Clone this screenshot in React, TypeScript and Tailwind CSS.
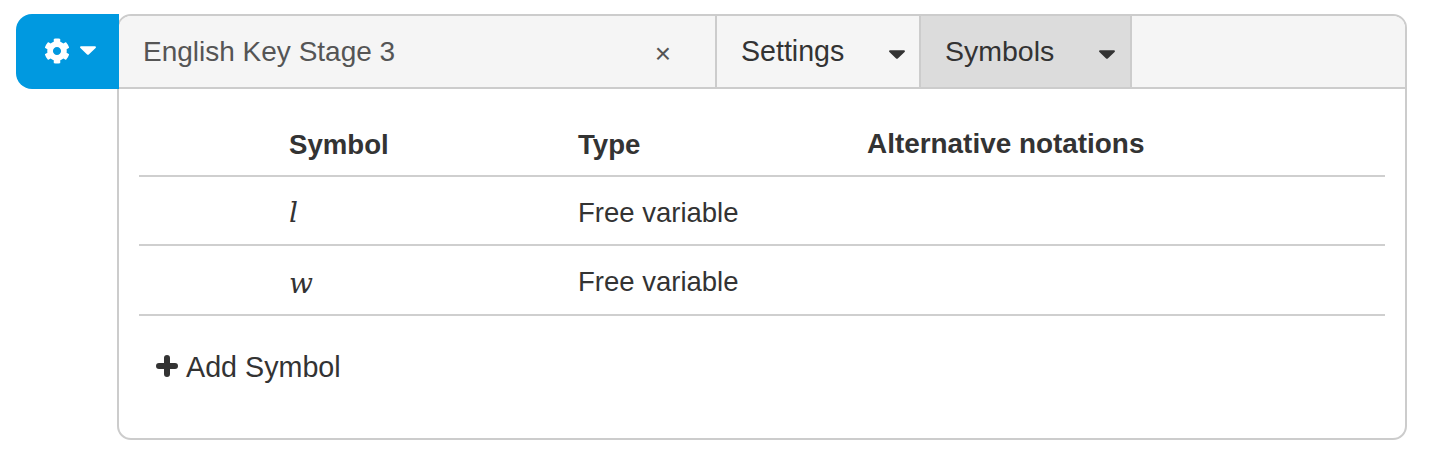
import React from "react";

function Caret({ className }: { className: string }) {
  return (
    <svg viewBox="0 0 16 9" className={className} aria-hidden="true">
      <path d="M1.2 0.2h13.6c1 0 1.5 1.2.8 1.9L8.8 8.4c-.5.5-1.2.5-1.7 0L.4 2.100C-.3 1.400.2.200 1.200.200z" fill="currentColor" />
    </svg>
  );
}

function Gear() {
  return (
    <svg viewBox="0 0 512 512" className="h-[26px] w-[26px] text-white" aria-hidden="true">
      <path
        fill="currentColor"
        d="M487.4 315.700l-42.600-24.600c4.300-23.200 4.300-47 0-70.200l42.600-24.600c4.900-2.800 7.100-8.600 5.500-14-11.100-35.600-30-67.800-54.700-94.600-3.800-4.100-10-5.100-14.800-2.300L380.800 110c-17.900-15.400-38.500-27.300-60.800-35.100V25.800c0-5.600-3.900-10.500-9.400-11.700-36.700-8.200-74.300-7.800-109.200 0-5.500 1.200-9.400 6.100-9.400 11.700V75c-22.200 7.900-42.800 19.800-60.800 35.100L88.700 85.500c-4.900-2.800-11-1.900-14.800 2.300-24.700 26.700-43.600 58.900-54.700 94.600-1.700 5.400.6 11.200 5.500 14L67.300 221c-4.300 23.200-4.300 47 0 70.200l-42.600 24.600c-4.900 2.800-7.100 8.600-5.500 14 11.100 35.600 30 67.800 54.700 94.600 3.800 4.100 10 5.100 14.800 2.300l42.600-24.600c17.900 15.400 38.500 27.300 60.800 35.100v49.200c0 5.600 3.900 10.500 9.400 11.700 36.700 8.200 74.300 7.800 109.200 0 5.500-1.200 9.400-6.100 9.400-11.700v-49.200c22.200-7.900 42.800-19.800 60.800-35.100l42.600 24.600c4.900 2.800 11 1.900 14.800-2.300 24.700-26.700 43.600-58.900 54.700-94.600 1.500-5.500-.7-11.300-5.600-14.100zM256 336c-44.100 0-80-35.900-80-80s35.900-80 80-80 80 35.900 80 80-35.900 80-80 80z"
      />
    </svg>
  );
}

function Row({ symbol, height, symbolPad, textPad }: { symbol: string; height: string; symbolPad: string; textPad: string }) {
  return (
    <div className={`grid grid-cols-[150px_289px_1fr] items-center border-b-2 border-[#cfcfcf] ${height}`}>
      <div />
      <div className={`font-['DejaVu_Serif',serif] text-[28px] italic leading-none text-[#333333] ${symbolPad}`}>{symbol}</div>
      <div className={`text-[27.5px] text-[#333333] ${textPad}`}>Free variable</div>
    </div>
  );
}

export default function App() {
  return (
    <div className="h-[454px] w-[1434px] overflow-hidden bg-white pl-[117px] pt-[14px] font-['Liberation_Sans',sans-serif]">
      <div className="h-[426px] w-[1290px] rounded-[14px] border-2 border-[#cccccc] bg-white">
        <div className="flex h-[73px] rounded-t-[12px] border-b-2 border-[#cccccc] bg-[#f5f5f5]">
          <div className="-my-[2px] -ml-[103px] flex h-[75px] w-[103px] shrink-0 items-center gap-[10px] rounded-l-[16px] bg-[#0099e0] pb-[2px] pl-[28px]">
            <Gear />
            <Caret className="h-[9px] w-[16px] text-white" />
          </div>
          <div className="flex w-[598px] shrink-0 items-center justify-between border-r-2 border-[#cccccc] pl-[24px] pr-[44px]">
            <span className="text-[28px] text-[#555555]">English Key Stage 3</span>
            <span className="relative top-[2px] text-[28px] leading-none text-[#555555]">×</span>
          </div>
          <div className="flex w-[202px] shrink-0 items-center justify-between pl-[24px] pr-[14px]">
            <span className="text-[28.6px] text-[#333333]">Settings</span>
            <Caret className="relative top-[3px] h-[9px] w-[16px] text-[#333333]" />
          </div>
          <div className="flex w-[213px] shrink-0 items-center justify-between border-x-2 border-[#cccccc] bg-[#dcdcdc] pl-[24px] pr-[15px]">
            <span className="text-[28.5px] text-[#333333]">Symbols</span>
            <Caret className="relative top-[3px] h-[9px] w-[16px] text-[#333333]" />
          </div>
        </div>
        <div className="px-[20px]">
          <div className="grid h-[88px] grid-cols-[150px_289px_289px_1fr] items-end border-b-2 border-[#cfcfcf] pb-[10px] font-bold text-[#333333]">
            <div />
            <div className="text-[27.6px]">Symbol</div>
            <div className="text-[27.6px]">Type</div>
            <div className="text-[27.9px]">Alternative notations</div>
          </div>
          <Row symbol="l" height="h-[69px]" symbolPad="pt-[4px]" textPad="pt-[5px]" />
          <Row symbol="w" height="h-[70px]" symbolPad="pt-[8px]" textPad="pt-[3px]" />
          <div className="flex items-center gap-[8px] pl-[17px] pt-[30px] text-[28.7px] text-[#333333]">
            <svg viewBox="0 0 22 22" className="-mt-[3px] h-[22px] w-[22px]" aria-hidden="true">
              <path d="M11 3v16M3 11h16" stroke="currentColor" strokeWidth="6" strokeLinecap="round" fill="none" />
            </svg>
            <span>Add Symbol</span>
          </div>
        </div>
      </div>
    </div>
  );
}
